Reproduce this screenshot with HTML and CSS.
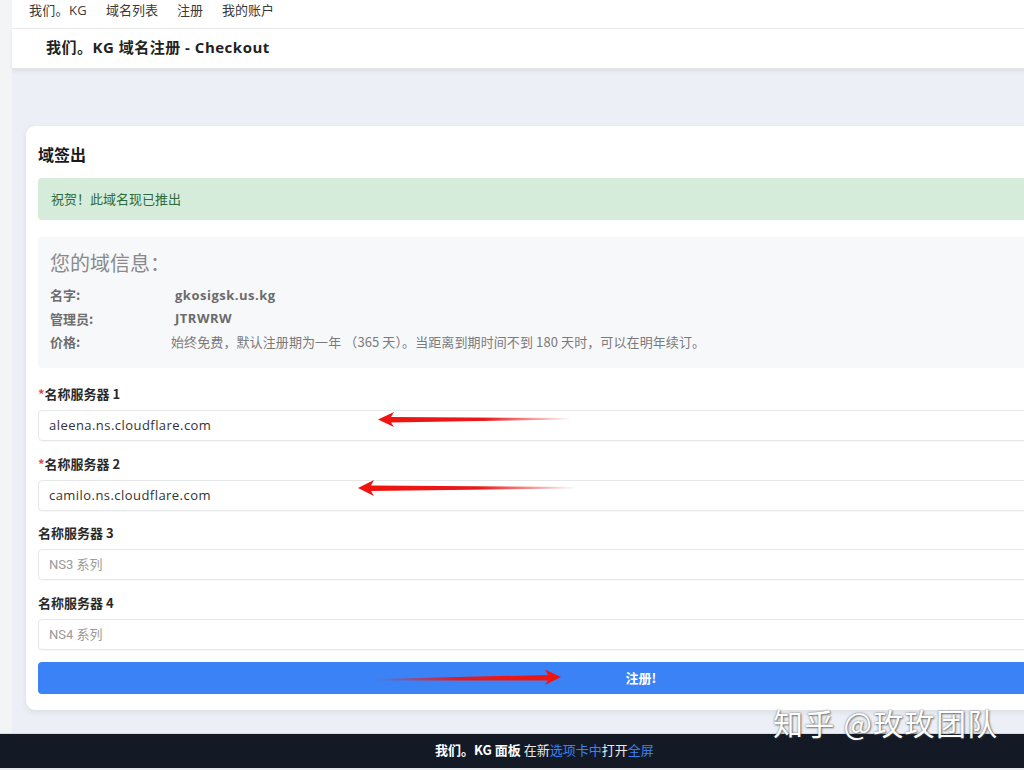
FILE: index.html
```html
<!DOCTYPE html>
<html lang="zh-CN">
<head>
<meta charset="utf-8">
<title>我们。KG 域名注册 - Checkout</title>
<link rel="stylesheet" href="styles.css">
</head>
<body>
<div class="shell">
  <div class="app">
    <nav class="topnav">
      <a class="nav-item">我们。KG</a>
      <a class="nav-item">域名列表</a>
      <a class="nav-item">注册</a>
      <a class="nav-item">我的账户</a>
    </nav>
    <header class="page-head">
      <h1 class="page-title">我们。KG 域名注册 - Checkout</h1>
    </header>
    <main class="main">
      <section class="card">
        <h2 class="card-title">域签出</h2>
        <div class="alert">祝贺！此域名现已推出</div>
        <div class="info">
          <div class="info-title">您的域信息：</div>
          <div class="info-row"><span class="info-label">名字:</span><span class="info-value strong">gkosigsk.us.kg</span></div>
          <div class="info-row"><span class="info-label">管理员:</span><span class="info-value strong">JTRWRW</span></div>
          <div class="info-row"><span class="info-label">价格:</span><span class="info-value price">始终免费，默认注册期为一年 （365 天）。当距离到期时间不到 180 天时，可以在明年续订。</span></div>
        </div>
        <form class="form">
          <div class="field">
            <label class="label"><span class="req">*</span>名称服务器 1</label>
            <div class="input">aleena.ns.cloudflare.com</div>
          </div>
          <div class="field">
            <label class="label"><span class="req">*</span>名称服务器 2</label>
            <div class="input">camilo.ns.cloudflare.com</div>
          </div>
          <div class="field">
            <label class="label">名称服务器 3</label>
            <div class="input placeholder">NS3 系列</div>
          </div>
          <div class="field">
            <label class="label">名称服务器 4</label>
            <div class="input placeholder">NS4 系列</div>
          </div>
          <div class="submit">注册!</div>
        </form>
      </section>
    </main>
  </div>
  <footer class="footer">
    <span class="foot-brand">我们。KG 面板</span>&nbsp;在新<span class="foot-link">选项卡中</span>打开<span class="foot-link">全屏</span>
  </footer>
  <div class="bottom-strip"></div>
</div>

<svg class="arrows" width="1024" height="770" viewBox="0 0 1024 770">
  <defs>
    <linearGradient id="gl" x1="0" y1="0" x2="1" y2="0">
      <stop offset="0" stop-color="#f0140f"/>
      <stop offset="0.55" stop-color="#e8191a"/>
      <stop offset="1" stop-color="#e8191a" stop-opacity="0"/>
    </linearGradient>
    <linearGradient id="gr" x1="1" y1="0" x2="0" y2="0">
      <stop offset="0" stop-color="#f0140f"/>
      <stop offset="0.55" stop-color="#e8191a"/>
      <stop offset="1" stop-color="#e8191a" stop-opacity="0"/>
    </linearGradient>
  </defs>
  <polygon fill="url(#gl)" points="378,419.5 394,412 391,417 572,418 572,419.5 391,422.5 394,427"/>
  <polygon fill="url(#gl)" points="358,488 374,480 371,485.5 577,487 577,488.5 371,491 374,496"/>
  <polygon fill="url(#gr)" points="561,677 545,669.5 548,675 373,679 373,680.5 548,680.5 545,685"/>
</svg>
<div class="watermark">知乎 @玫玫团队</div>
</body>
</html>
```

FILE: styles.css
```css
* { box-sizing: border-box; }

html, body {
  margin: 0;
  padding: 0;
}

body {
  width: 1024px;
  height: 770px;
  overflow: hidden;
  position: relative;
  background: #f3f4f6;
  font-family: "Open Sans", "Noto Sans CJK SC", sans-serif;
  font-size: 13px;
  color: #333;
}

.shell {
  display: flex;
  flex-direction: column;
  width: 1024px;
  height: 770px;
}

.app {
  margin-left: 12px;
  width: 1258px;
  display: flex;
  flex-direction: column;
  flex: 0 0 auto;
  height: 733px;
  background: #eceff5;
}

.topnav {
  height: 29px;
  background: #fff;
  border-bottom: 1px solid #e9eaec;
  display: flex;
  align-items: flex-start;
  gap: 19px;
  padding-left: 17px;
  padding-top: 1px;
  line-height: 18px;
  font-family: "Noto Sans CJK SC", sans-serif;
  font-size: 13px;
  color: #3a3a3a;
}

.nav-item { color: #3a3a3a; text-decoration: none; }
.nav-item:first-child {
  font-family: "Open Sans", "Noto Sans CJK SC", sans-serif;
  letter-spacing: 0.3px;
}

.page-head {
  height: 40px;
  background: #fff;
  display: flex;
  align-items: center;
  padding-left: 34px;
  padding-bottom: 4px;
  box-shadow: 0 2px 4px rgba(0, 0, 0, 0.08);
  border-bottom: 1px solid #e4e6ea;
  position: relative;
}

.page-title {
  margin: 0;
  font-size: 15px;
  font-weight: 700;
  color: #222;
  font-family: "Open Sans", "Noto Sans CJK SC", sans-serif;
  letter-spacing: 0.5px;
}

.main {
  flex: 1;
  padding: 57px 14px 0 14px;
}

.card {
  background: #fff;
  border-radius: 9px;
  box-shadow: 0 2px 6px rgba(0, 0, 0, 0.08);
  padding: 18px 12px 16px 12px;
}

.card-title {
  margin: 0 0 14px 0;
  font-size: 16px;
  line-height: 20px;
  font-weight: 700;
  color: #1a1a1a;
  font-family: "Noto Sans CJK SC", sans-serif;
}

.alert {
  height: 42px;
  line-height: 42px;
  padding-left: 13px;
  background: #d5ecda;
  border-radius: 4px;
  color: #2c6a3a;
  font-size: 13px;
  font-family: "Noto Sans CJK SC", sans-serif;
  margin-bottom: 17px;
}

.info {
  background: #f7f8fa;
  border-radius: 4px;
  height: 131px;
  padding: 12px 12px 0 12px;
  margin-bottom: 15px;
}

.info-title {
  font-size: 20px;
  line-height: 28px;
  color: #8a8a8a;
  font-family: "Noto Sans CJK SC", sans-serif;
  margin-bottom: 6px;
}

.info-row {
  display: flex;
  align-items: center;
  height: 23.5px;
  color: #707070;
  font-size: 13px;
}

.info-label {
  width: 125px;
  flex: 0 0 125px;
  font-weight: 600;
  color: #6e6e6e;
  font-family: "Noto Sans CJK SC", sans-serif;
}

.info-value.strong {
  font-weight: 700;
  color: #6b6b6b;
  letter-spacing: 0.5px;
}

.info-value.price {
  margin-left: -4px;
  color: #7a7a7a;
  font-family: "Noto Sans CJK SC", sans-serif;
  letter-spacing: 0.1px;
}

.form {
  display: flex;
  flex-direction: column;
  gap: 11.6px;
}

.field {
  display: flex;
  flex-direction: column;
  gap: 6px;
}

.label {
  line-height: 21px;
  height: 21px;
  font-size: 13px;
  font-weight: 700;
  color: #2a2a2a;
  font-family: "Noto Sans CJK SC", sans-serif;
}

.req { color: #e24b4b; }

.input {
  height: 31px;
  line-height: 29px;
  border: 1px solid #e6e7e9;
  border-radius: 4px;
  padding-left: 10px;
  font-size: 13px;
  color: #333;
  letter-spacing: 0.45px;
  box-shadow: 0 1px 1px rgba(0, 0, 0, 0.03);
}

.input.placeholder {
  color: #9a9a9a;
  letter-spacing: 0;
  font-family: "Roboto", "Noto Sans CJK SC", sans-serif;
}

.submit {
  margin-top: 1px;
  height: 32px;
  line-height: 32px;
  background: #3b82f6;
  border-radius: 4px;
  color: #fff;
  text-align: center;
  font-weight: 700;
  font-size: 13px;
  font-family: "Noto Sans CJK SC", sans-serif;
}

.footer {
  height: 35px;
  background: #131a26;
  color: #e8e8e8;
  display: flex;
  align-items: center;
  padding-left: 435px;
  padding-bottom: 3px;
  font-size: 13px;
  font-family: "Noto Sans CJK SC", sans-serif;
  white-space: nowrap;
  border-top: 1px solid #d8dadf;
}

.foot-brand {
  font-weight: 700;
  color: #fff;
}

.foot-link { color: #3b82f6; }

.bottom-strip {
  flex: 1;
  background: #e9ebee;
}

.arrows {
  position: absolute;
  left: 0;
  top: 0;
  pointer-events: none;
}

.watermark {
  position: absolute;
  left: 773px;
  top: 702px;
  font-size: 30px;
  line-height: 40px;
  color: #fff;
  font-family: "Noto Sans CJK SC", sans-serif;
  letter-spacing: 1.3px;
  text-shadow: 0 0 2px rgba(60, 60, 60, 0.7), 1px 1px 2px rgba(60, 60, 60, 0.6);
  white-space: nowrap;
}
```
